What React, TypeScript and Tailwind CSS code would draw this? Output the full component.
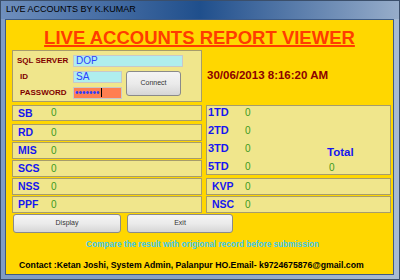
import React from "react";

const F = { fontFamily: '"Liberation Sans", Arial, sans-serif' };

function Row({ label, h = "h-[17px]", mt = "" }: { label: string; h?: string; mt?: string }) {
  return (
    <div className={`${h} ${mt} flex items-center border border-[#a69c6c] bg-[#f0e68c] pl-[5px]`}>
      <span className="w-[33px] text-[10.5px] font-bold text-[#1616f0] leading-none">{label}</span>
      <span className="text-[10px] text-[#3c9a1e] leading-none">0</span>
    </div>
  );
}

function TdRow({ label }: { label: string }) {
  return (
    <div className="h-[12px] flex items-center">
      <span className="w-[37px] text-[11px] font-bold text-[#1616f0] leading-none">{label}</span>
      <span className="text-[10px] text-[#3c9a1e] leading-none mt-[2px]">0</span>
    </div>
  );
}

function Btn({ label, w, h, cls = "" }: { label: string; w: string; h: string; cls?: string }) {
  return (
    <div
      className={`${w} ${h} ${cls} flex items-center justify-center rounded-[3px] border border-[#8a8a8a] bg-gradient-to-b from-[#f4f4f4] via-[#ebebeb] to-[#d6d6d6] text-[7px] text-[#333]`}
    >
      {label}
    </div>
  );
}

export default function App() {
  return (
    <div
      style={F}
      className="w-[400px] h-[280px] flex flex-col bg-gradient-to-r from-[#7f9cc4] via-[#8aa3c6] to-[#a8bbd3] border border-[#3b4f6b] overflow-hidden"
    >
      <div className="h-[18px] shrink-0 flex items-center pl-[5px] bg-gradient-to-r from-[#6f8fbd] via-[#1f4f8c] to-[#97adca] text-[9px] text-black">
        LIVE ACCOUNTS BY K.KUMAR
      </div>
      <div className="ml-[4px] mr-[5px] mb-[4px] flex-1 bg-[#ffd700] border border-[#3d5a85] flex flex-col">
        <div className="mt-[7px] h-[21px] text-center text-[18.5px] leading-[21px] font-bold text-[#ff3c00] underline decoration-[1.5px] underline-offset-[1px]">
          LIVE ACCOUNTS REPORT VIEWER
        </div>
        <div className="mt-[2px] flex items-center pl-[6px]">
          <div className="w-[190px] h-[52px] border border-[#a69c6c] bg-[#f0e68c] pt-[4px] pl-[4px]">
            <div className="flex items-center">
              <span className="w-[56px] text-[8px] font-bold text-[#800000] leading-none">SQL SERVER</span>
              <div className="w-[110px] h-[12px] bg-[#afeeee] border border-[#c8c8c8] text-[10px] leading-none text-[#2a40ff] pl-[2px] flex items-center">
                DOP
              </div>
            </div>
            <div className="flex mt-[4px]">
              <div className="flex flex-col gap-[4px]">
                <div className="flex items-center h-[12px]">
                  <span className="w-[56px] pl-[3px] text-[8px] font-bold text-[#800000] leading-none">ID</span>
                  <div className="w-[49px] h-[12px] bg-[#afeeee] border border-[#c8c8c8] text-[10px] leading-none text-[#2a40ff] pl-[2px] flex items-center">
                    SA
                  </div>
                </div>
                <div className="flex items-center h-[11px]">
                  <span className="w-[56px] pl-[3px] text-[8px] font-bold text-[#800000] leading-none">PASSWORD</span>
                  <div className="w-[49px] h-[12px] bg-[#ff7f50] border border-[#c8c8c8] text-[10px] leading-none text-[#2a40ff] pl-[1px] flex items-center">
                    •••••••<span className="ml-[1px] w-px h-[9px] bg-black" />
                  </div>
                </div>
              </div>
              <Btn label="Connect" w="w-[55px]" h="h-[25px]" cls="ml-[4px]" />
            </div>
          </div>
          <div className="ml-[5px] text-[11.5px] font-bold text-[#8b0000] leading-none">30/06/2013 8:16:20 AM</div>
        </div>
        <div className="mt-[3px] flex pl-[6px]">
          <div className="w-[190px] flex flex-col">
            <Row label="SB" h="h-[16px]" />
            <Row label="RD" mt="mt-[3px]" />
            <Row label="MIS" mt="mt-[1px]" />
            <Row label="SCS" mt="mt-[1px]" />
            <Row label="NSS" mt="mt-[1px]" />
            <Row label="PPF" mt="mt-[1px]" />
          </div>
          <div className="ml-[4px] w-[185px] flex flex-col">
            <div className="h-[70px] border border-[#a69c6c] bg-[#f0e68c] flex">
              <div className="w-[120px] pl-[1px] flex flex-col gap-[6px]">
                <TdRow label="1TD" />
                <TdRow label="2TD" />
                <TdRow label="3TD" />
                <TdRow label="5TD" />
              </div>
              <div className="flex flex-col pt-[40px]">
                <div className="h-[14px] flex items-center text-[11.5px] font-bold text-[#1616f0] leading-none">Total</div>
                <div className="mt-[2px] h-[12px] pl-[2px] flex items-center text-[10px] text-[#3c9a1e] leading-none">0</div>
              </div>
            </div>
            <div className="mt-[3px] flex flex-col">
              <Row label="KVP" />
              <Row label="NSC" mt="mt-[1px]" />
            </div>
          </div>
        </div>
        <div className="mt-[1px] flex pl-[7px]">
          <Btn label="Display" w="w-[108px]" h="h-[19px]" />
          <Btn label="Exit" w="w-[106px]" h="h-[19px]" cls="ml-[6px]" />
        </div>
        <div className="mt-[7px] h-[10px] pl-[6px] text-center text-[8.2px] font-bold leading-[10px] text-[#3cc8f0]">
          Compare the result with origional record before submission
        </div>
        <div className="mt-[9px] h-[12px] pl-[13px] text-[8.7px] font-bold leading-[12px] text-black">
          Contact :Ketan Joshi, System Admin, Palanpur HO.Email- k9724675876@gmail.com
        </div>
      </div>
    </div>
  );
}
